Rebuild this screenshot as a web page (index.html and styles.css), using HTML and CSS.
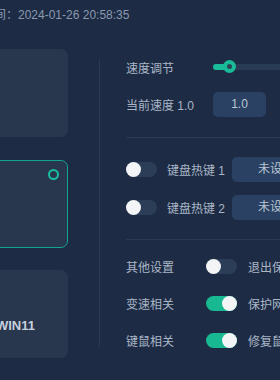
FILE: index.html
```html
<!DOCTYPE html>
<html lang="zh-CN">
<head>
<meta charset="utf-8">
<link rel="stylesheet" href="styles.css">
</head>
<body>
<div class="app">
  <header class="topbar"><span class="time">当前时间：2024-01-26 20:58:35</span></header>
  <div class="main">
    <div class="cards">
      <div class="card"></div>
      <div class="card selected"><span class="ring"></span></div>
      <div class="card"><span class="card-label">WIN11</span></div>
    </div>
    <div class="vdivider"></div>
    <div class="panel">
      <section class="sec sec-speed">
        <div class="row">
          <span class="label wide">速度调节</span>
          <div class="track"><div class="fill"></div><span class="thumb"></span></div>
        </div>
        <div class="row">
          <span class="label wide">当前速度 1.0</span>
          <div class="box small">1.0</div>
        </div>
      </section>
      <div class="hline"></div>
      <section class="sec sec-keys">
        <div class="row">
          <span class="switch"><span class="knob"></span></span>
          <span class="label key">键盘热键 1</span>
          <div class="box large">未设置</div>
        </div>
        <div class="row">
          <span class="switch"><span class="knob"></span></span>
          <span class="label key">键盘热键 2</span>
          <div class="box large">未设置</div>
        </div>
      </section>
      <div class="hline"></div>
      <section class="sec sec-other">
        <div class="row">
          <span class="label mid">其他设置</span>
          <span class="switch"><span class="knob"></span></span>
          <span class="label opt">退出保护模式</span>
        </div>
        <div class="row">
          <span class="label mid">变速相关</span>
          <span class="switch on"><span class="knob"></span></span>
          <span class="label opt">保护网络连接</span>
        </div>
        <div class="row">
          <span class="label mid">键鼠相关</span>
          <span class="switch on"><span class="knob"></span></span>
          <span class="label opt">修复鼠标偏移</span>
        </div>
      </section>
    </div>
  </div>
</div>
</body>
</html>
```
FILE: styles.css
```css
html, body {
  margin: 0;
  padding: 0;
  width: 280px;
  height: 380px;
  overflow: hidden;
  background: #1d2c44;
}
body {
  font-family: "Liberation Sans", "Noto Sans CJK SC", sans-serif;
  font-size: 12px;
  color: #aab6c7;
}
.app {
  width: 280px;
  height: 380px;
}
.topbar {
  height: 30px;
  line-height: 30px;
  white-space: nowrap;
}
.time {
  display: inline-block;
  margin-left: -42px;
  color: #8a99af;
  font-size: 12px;
}
.main {
  display: flex;
  margin-top: 19px;
}
.cards {
  flex-shrink: 0;
  width: 160px;
  margin-left: -92px;
  display: flex;
  flex-direction: column;
  gap: 22.5px;
}
.card {
  position: relative;
  box-sizing: border-box;
  height: 88px;
  border-radius: 7px;
  background: #28364e;
  border: 1.5px solid #28364e;
  display: flex;
  align-items: flex-end;
  justify-content: flex-end;
}
.card.selected {
  border-color: #14a58d;
  background: #28364e;
}
.ring {
  position: absolute;
  top: 8.5px;
  right: 8.5px;
  width: 7px;
  height: 7px;
  border: 2.5px solid #18c0a0;
  border-radius: 50%;
}
.card-label {
  color: #c6d0dd;
  font-size: 13px;
  font-weight: 600;
  padding: 0 32px 24px 0;
}
.vdivider {
  flex-shrink: 0;
  width: 1px;
  height: 288px;
  margin: 10px 0 0 31px;
  background: #2b3a54;
}
.panel {
  flex: 1;
  min-width: 0;
  padding-left: 26px;
  padding-top: 6px;
}
.sec {
  display: flex;
  flex-direction: column;
}
.sec-speed { gap: 12px; }
.sec-keys { gap: 13px; margin-top: 19px; }
.sec-other { gap: 12px; margin-top: 14px; }
.hline {
  height: 1px;
  background: #2b3a54;
  margin-top: 20px;
  margin-right: -60px;
}
.sec-keys + .hline { margin-top: 19px; }
.row {
  height: 25px;
  display: flex;
  align-items: center;
  white-space: nowrap;
}
.label {
  flex-shrink: 0;
  color: #aab6c7;
  white-space: nowrap;
}
.label.wide { width: 87px; }
.label.mid { width: 80px; }
.label.key { width: 65px; margin-left: 10px; }
.label.opt { margin-left: 11px; }
.track {
  position: relative;
  flex-shrink: 0;
  width: 100px;
  height: 6px;
  border-radius: 3px;
  background: #2a3b56;
  margin-top: -2px;
}
.fill {
  width: 16px;
  height: 6px;
  border-radius: 3px;
  background: #19bb98;
}
.thumb {
  position: absolute;
  left: 9.5px;
  top: -3.5px;
  width: 13px;
  height: 13px;
  border-radius: 50%;
  background: #19bb98;
  display: flex;
  align-items: center;
  justify-content: center;
}
.thumb::after {
  content: "";
  width: 5px;
  height: 5px;
  border-radius: 50%;
  background: #2b4556;
}
.box {
  flex-shrink: 0;
  box-sizing: border-box;
  height: 25px;
  line-height: 25px;
  border-radius: 5px;
  background: #2a4163;
  color: #bcc7d5;
  text-align: center;
}
.box.small { width: 53px; }
.box.large { width: 88px; }
.switch {
  flex-shrink: 0;
  display: flex;
  align-items: center;
  width: 31px;
  height: 15px;
  border-radius: 8px;
  background: #2c3d58;
}
.switch.on {
  justify-content: flex-end;
  background: #17b892;
}
.knob {
  width: 15px;
  height: 15px;
  border-radius: 50%;
  background: #f3f4f6;
}
```
